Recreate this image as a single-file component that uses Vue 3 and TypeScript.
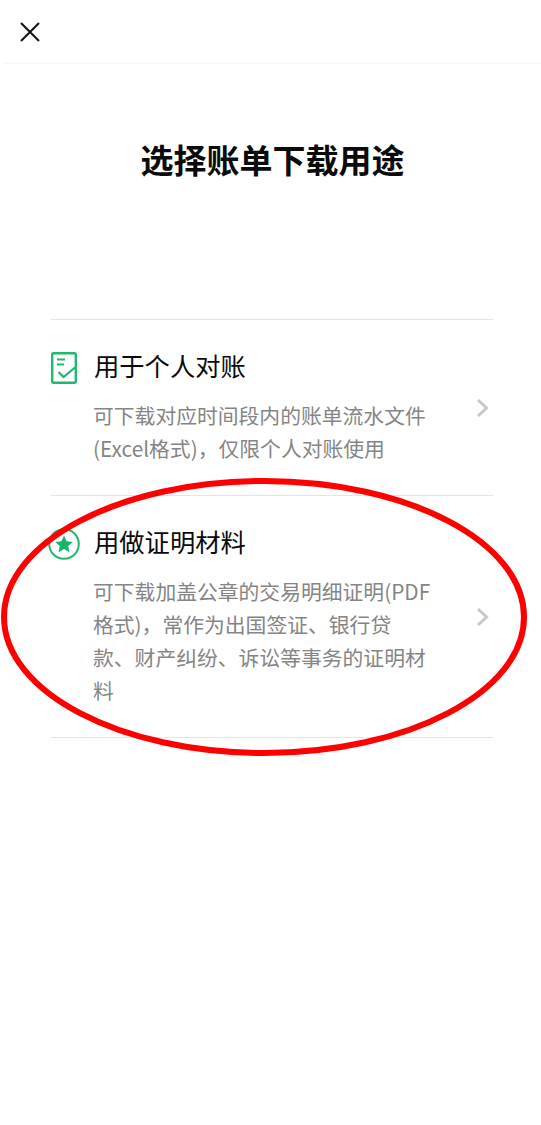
<script setup lang="ts">
// Écran « choisir l'usage du relevé » : deux options + annotation rouge par-dessus.
interface Purpose {
  title: string;
  lines: string[];
  icon: 'doc' | 'star';
}

const purposes: Purpose[] = [
  {
    title: '用于个人对账',
    lines: ['可下载对应时间段内的账单流水文件', '(Excel格式)，仅限个人对账使用'],
    icon: 'doc',
  },
  {
    title: '用做证明材料',
    lines: [
      '可下载加盖公章的交易明细证明(PDF',
      '格式)，常作为出国签证、银行贷',
      '款、财产纠纷、诉讼等事务的证明材',
      '料',
    ],
    icon: 'star',
  },
];
</script>

<template>
  <div class="page">
    <header class="topbar">
      <svg class="close" width="20" height="20" viewBox="0 0 20 20" aria-label="关闭">
        <path d="M1 1 L19 19 M19 1 L1 19" stroke="#111" stroke-width="2" fill="none" />
      </svg>
    </header>

    <h1 class="heading">选择账单下载用途</h1>

    <ul class="options">
      <li v-for="p in purposes" :key="p.title" class="option">
        <div class="option__icon">
          <svg v-if="p.icon === 'doc'" width="26" height="32" viewBox="0 0 26 32">
            <rect x="1.2" y="1.2" width="23.6" height="29.6" rx="1.5" fill="none" stroke="#1fb96c" stroke-width="2.4" />
            <path d="M6 7.5 H14 M6 12.5 H13" stroke="#1fb96c" stroke-width="2.2" fill="none" />
            <path d="M7.5 20 L12.5 25 L24 15.5" stroke="#1fb96c" stroke-width="2.2" fill="none" />
          </svg>
          <svg v-else width="32" height="32" viewBox="0 0 32 32">
            <circle cx="16" cy="16" r="14.8" fill="none" stroke="#1fb96c" stroke-width="2" />
            <path
              d="M16 7.5 L18.6 13.2 L24.8 13.9 L20.2 18.1 L21.5 24.2 L16 21.1 L10.5 24.2 L11.8 18.1 L7.2 13.9 L13.4 13.2 Z"
              fill="#12b76a"
            />
          </svg>
        </div>
        <div class="option__body">
          <div class="option__title">{{ p.title }}</div>
          <p class="option__desc">
            <span v-for="line in p.lines" :key="line" class="option__line">{{ line }}</span>
          </p>
        </div>
        <svg class="option__chevron" width="13" height="20" viewBox="0 0 13 20">
          <path d="M2 2 L10.5 10 L2 18" stroke="#c8c8c8" stroke-width="3" fill="none" />
        </svg>
      </li>
    </ul>

    <svg class="annotation" width="541" height="300" viewBox="0 0 541 300">
      <path
        d="M4 139 C4 64 120 3 264 3 C408 3 524 64 524 139 C524 214 408 275 264 275 C120 275 4 214 4 139 Z"
        fill="none"
        stroke="#ff0000"
        stroke-width="6"
      />
    </svg>
  </div>
</template>

<style scoped>
.page {
  position: relative;
  width: 541px;
  height: 1125px;
  overflow: hidden;
  background: #fff;
  font-family: "Noto Sans CJK SC", "Liberation Sans", sans-serif;
}
.topbar {
  height: 63px;
  margin-left: 3px;
  padding-left: 17px;
  display: flex;
  align-items: center;
  border-bottom: 1px solid #f6f6f6;
}
.close {
  display: block;
}
.heading {
  margin: 70px 0 0;
  padding-left: 4px;
  font-size: 33px;
  line-height: 50px;
  font-weight: 700;
  text-align: center;
  color: #0a0a0a;
}
.options {
  list-style: none;
  margin: 135px 48px 0 51px;
  padding: 0;
  border-top: 1px solid #e4e4e4;
}
.option {
  display: flex;
  align-items: flex-start;
  padding: 27px 0 29px;
  border-bottom: 1px solid #e4e4e4;
}
.option__icon {
  width: 32px;
  margin-left: -3px;
  margin-right: 14px;
  padding-top: 5px;
  display: flex;
  justify-content: center;
  flex: none;
}
.option__body {
  flex: 1;
}
.option__title {
  font-size: 25.3px;
  line-height: 36px;
  color: #0a0a0a;
}
.option__desc {
  margin: 16px 0 0 -1px;
  font-size: 20.8px;
  line-height: 33.3px;
  color: #858585;
}
.option__line {
  display: block;
  white-space: nowrap;
}
.option__chevron {
  flex: none;
  align-self: center;
  margin-top: 3px;
  margin-right: 4px;
}
.annotation {
  position: absolute;
  left: 0;
  top: 478px;
  pointer-events: none;
}
</style>
